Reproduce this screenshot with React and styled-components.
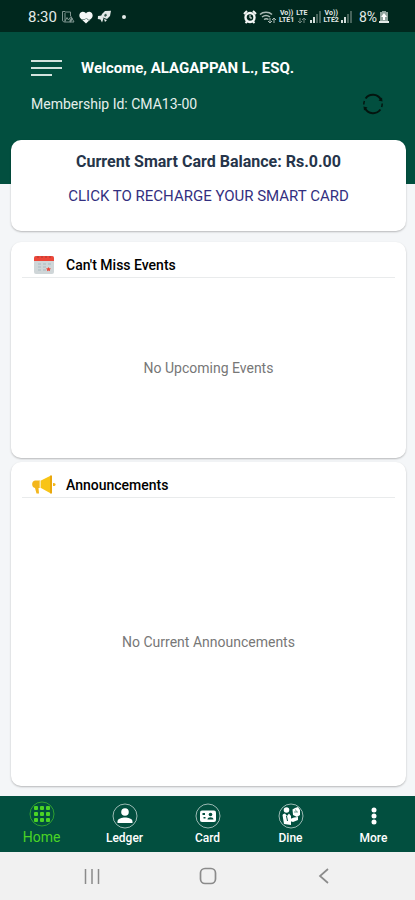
import React from 'react';
import styled, { createGlobalStyle } from 'styled-components';

const App = () => {
  return (
    <>
      <GlobalStyle />
      <Screen>
        <StatusBar />
        <Header>
          <TopRow>
            <MenuButton aria-label="Menu">
              <svg width="32" height="18" viewBox="0 0 32 18" fill="none" stroke="#d3e3de" strokeWidth="2">
                <path d="M0 2H31M0 9H31M0 16H21" />
              </svg>
            </MenuButton>
            <Welcome>Welcome, ALAGAPPAN L., ESQ.</Welcome>
          </TopRow>
          <MemberRow>
            <MemberId>Membership Id: CMA13-00</MemberId>
            <RefreshButton aria-label="Refresh">
              <RefreshIcon />
            </RefreshButton>
          </MemberRow>
        </Header>
        <Content>
          <BalanceCard>
            <Balance>Current Smart Card Balance: Rs.0.00</Balance>
            <Recharge href="#recharge">CLICK TO RECHARGE YOUR SMART CARD</Recharge>
          </BalanceCard>
          <Panels>
            <Panel title="Can't Miss Events" icon={<CalendarIcon />} empty="No Upcoming Events" grow={2} />
            <Panel title="Announcements" icon={<MegaphoneIcon />} empty="No Current Announcements" grow={3} />
          </Panels>
        </Content>
        <TabBar>
          {tabs.map(({ label, Icon, active }) => (
            <Tab key={label} href={`#${label.toLowerCase()}`} $active={active}>
              <Icon />
              <TabLabel $active={active}>{label}</TabLabel>
            </Tab>
          ))}
        </TabBar>
        <SystemBar />
      </Screen>
    </>
  )
}

const StatusBar = () => (
  <Status>
    <StatusGroup>
      <Clock>8:30</Clock>
      <svg width="14" height="14" viewBox="0 0 14 14" fill="none" stroke="#7f9690">
        <path d="M4 1.5H1.5V10C1.5 11.5 2.500 12 4 12M4 2H9.500V6M4 3V12H13L10 6.500L7.500 10L6 7.500L4 11" />
        <path d="M9 12L11 8" strokeWidth="2" />
      </svg>
      <svg width="14" height="13" viewBox="0 0 14 13">
        <path d="M7 12.500L1.400 7.200C-.6 5 .3 1 3.500.7C5.200.5 6.400 1.400 7 2.500C7.600 1.400 8.800.5 10.500.7C13.700 1 14.600 5 12.600 7.200Z" fill="#f4f7f6" />
        <path d="M3 8.500H6L7.500 7L9 9H11" stroke="#7f9690" fill="none" />
      </svg>
      <svg width="15" height="14" viewBox="0 0 15 14" fill="#e3eae8">
        <path d="M5 4L8 1L14 .8L13 6L10 9L7 8L4 6.500Z" />
        <path d="M1 6L5 5.500L6.500 8.500L5 12.500L3.500 9.500L.8 9Z" />
        <path d="M7 9L10 10L8 12Z" />
        <path d="M7 5L9 3.500L10 5.500L8 7Z" fill="#375a50" />
      </svg>
      <Dot />
    </StatusGroup>
    <StatusGroup $end>
      <svg width="14" height="14" viewBox="0 0 14 14" fill="none">
        <circle cx="7" cy="7.500" r="4.500" stroke="#f4f7f6" strokeWidth="2.400" />
        <path d="M1 4L4 1M13 4L10 1M2.500 13L4 11.500M11.500 13L10 11.500" stroke="#f4f7f6" strokeWidth="2" />
        <path d="M7 5V8H9" stroke="#f4f7f6" />
      </svg>
      <svg width="18" height="14" viewBox="0 0 18 14" fill="none" stroke="#a9bab5" strokeWidth="1.500">
        <path d="M1 4.500C4 1.500 10 1.500 13 4.500M3 7C5.500 5 8.500 5 11 7M5 9.500C6.500 8.500 8 8.500 9.500 9.500" />
        <path d="M11 8V13M9 11L11 13L13 11M15 13V8M13 10L15 8L17 10" strokeWidth="1" />
      </svg>
      <Carrier><span>Vo))</span><span>LTE1</span></Carrier>
      <Carrier>
        <span>LTE</span>
        <svg width="10" height="7" viewBox="0 0 10 7" fill="none" stroke="#70877f">
          <path d="M3 1V6M1 4L3 6L5 4M7 6V1M5 3L7 1L9 3" />
        </svg>
      </Carrier>
      <Signal />
      <Carrier><span>Vo))</span><span>LTE2</span></Carrier>
      <Signal />
      <Battery>8%</Battery>
      <svg width="10" height="14" viewBox="0 0 10 14">
        <path d="M3 1H7V2H9V13H1V2H3Z" fill="#91a59f" />
        <path d="M5 3L8 7H6V10H4V7H2Z" fill="#fff" />
        <path d="M0 11H10V13H0Z" fill="#e3eae8" />
      </svg>
    </StatusGroup>
  </Status>
)

const Signal = () => (
  <svg width="12" height="12" viewBox="0 0 12 12">
    <path d="M0 12V9H2V12ZM3 12V6H5V12Z" fill="#d3dedb" />
    <path d="M6 12V3H8V12ZM9 12V0H11V12Z" fill="#47645b" />
  </svg>
)

const RefreshIcon = () => (
  <svg width="22" height="22" viewBox="0 0 22 22" fill="none" stroke="#04150f" strokeWidth="2">
    <path d="M3.600 5.500A9 9 0 0 1 18.800 6.500M18.400 16.500A9 9 0 0 1 3.200 15.500" />
    <path d="M1.800 11.500C1.800 10 2 9 2.400 8M20.200 10.500C20.200 12 20 13 19.600 14" strokeWidth="1.500" />
    <path d="M16.500 7.500L20.500 8.500L20 4.500ZM5.500 14.500L1.500 13.500L2 17.500Z" fill="#04150f" stroke="none" />
  </svg>
)

const CalendarIcon = () => (
  <svg width="20" height="20" viewBox="0 0 20 20">
    <rect y="1" width="20" height="18" rx="2" fill="#cfd6d8" />
    <path d="M0 6V3Q0 1 2 1H18Q20 1 20 3V6Z" fill="#ed4639" />
    <path d="M4 1V3M8 1V3M12 1V3M16 1V3" stroke="#a93a34" />
    <path d="M4 9H7M9 9H12M14 9H17M4 12H7M9 12H12M4 15H7M9 15H12" stroke="#bcc8cc" strokeWidth="2" />
    <path d="M14.500 12L15.200 13.300L17 13.500L15.800 14.700L16 16.200L14.500 15.500L13 16.200L13.200 14.700L12 13.500L13.800 13.300Z" fill="#ed4639" />
  </svg>
)

const MegaphoneIcon = () => (
  <svg width="24" height="20" viewBox="0 0 24 20">
    <path d="M8 5.500V13H6.500L7 18.500H4.500L3 13C-.8 12.500-.8 6 3 5.500Z" fill="#f3b61c" />
    <path d="M9 5.500L18 1V18L9 13Z" fill="#f8c416" />
    <path d="M18 .5H20V18.500H18Z" fill="#e9a70c" />
    <path d="M21 8C24.500 7.500 24.500 11.500 21 11Z" fill="#f3b61c" />
    <path d="M7.500 5.500H9V13H7.500Z" fill="#fbe6a5" />
  </svg>
)

const Panel = ({ title, icon, empty, grow }) => (
  <PanelCard $grow={grow}>
    <PanelHead>
      <IconSlot>{icon}</IconSlot>
      <PanelTitle>{title}</PanelTitle>
    </PanelHead>
    <Empty>{empty}</Empty>
  </PanelCard>
)

const RoundIcon = ({ children }) => (
  <svg width="26" height="26" viewBox="0 0 26 26" fill="currentColor">
    <circle cx="13" cy="13" r="12" fill="none" stroke="currentColor" strokeOpacity=".6" />
    {children}
  </svg>
)

const HomeIcon = () => (
  <RoundIcon>
    {[7, 13, 19].map((y) => [7, 13, 19].map((x) => (
      <rect key={`${x}-${y}`} x={x - 2} y={y - 2} width="4" height="4" rx="1" />
    )))}
  </RoundIcon>
)

const LedgerIcon = () => (
  <RoundIcon>
    <circle cx="13" cy="9" r="3.800" />
    <path d="M5.500 20V18.500C5.500 15.500 10 14.500 13 14.500S20.500 15.500 20.500 18.500V20Z" />
  </RoundIcon>
)

const CardIcon = () => (
  <RoundIcon>
    <rect x="5" y="7.500" width="16" height="11.500" rx="2" />
    <g fill="#024f3f">
      <circle cx="15.500" cy="11.500" r="1.800" />
      <path d="M12.500 16.500C12.500 13.500 18.500 13.500 18.500 16.500ZM7.500 10H10V12H7.500ZM8.500 14H10.500V15.500H8.500Z" />
    </g>
  </RoundIcon>
)

const DineIcon = () => (
  <RoundIcon>
    <circle cx="8.500" cy="7" r="2.800" />
    <path d="M4.500 12Q5 10.500 7 10.500L9 13L11 10.500L13 13V22L6 21Z" />
    <path d="M12 16L16 14.500L20 14V17L15 19L12 18Z" />
    <path d="M14.500 6.500L17 5L20 4L22 7V12L19 14L15 12Z" />
    <path d="M16 9H20M17.500 6.500L18.500 9" stroke="#6f9c91" fill="none" />
    <path d="M8.500 13L9.500 18" stroke="#024f3f" />
  </RoundIcon>
)

const MoreIcon = () => (
  <svg width="26" height="26" viewBox="0 0 26 26" fill="currentColor">
    <circle cx="13" cy="7" r="2.500" />
    <circle cx="13" cy="13" r="2.500" />
    <circle cx="13" cy="19" r="2.500" />
  </svg>
)

const SystemBar = () => (
  <System>
    <SystemButton aria-label="Recent apps">
      <svg width="16" height="16" viewBox="0 0 16 16" stroke="#8b8b8b" strokeWidth="1.500">
        <path d="M1.500 1V16M8 1V16M14.500 1V16" />
      </svg>
    </SystemButton>
    <SystemButton aria-label="Home screen">
      <svg width="18" height="18" viewBox="0 0 18 18" fill="none" stroke="#8b8b8b" strokeWidth="1.700">
        <rect x="1.500" y="1.500" width="15" height="15" rx="4.500" />
      </svg>
    </SystemButton>
    <SystemButton aria-label="Back">
      <svg width="16" height="16" viewBox="0 0 16 16" fill="none" stroke="#8b8b8b" strokeWidth="1.700">
        <path d="M12 1L4 8L12 15" />
      </svg>
    </SystemButton>
  </System>
)

const tabs = [
  { label: 'Home', Icon: HomeIcon, active: true },
  { label: 'Ledger', Icon: LedgerIcon },
  { label: 'Card', Icon: CardIcon },
  { label: 'Dine', Icon: DineIcon },
  { label: 'More', Icon: MoreIcon },
];

export default App

const GlobalStyle = createGlobalStyle`
  * {
    box-sizing: border-box;
  }

  body {
    margin: 0;
    background-color: #f4f6f8;
    font-family: Roboto, sans-serif;
  }

  button {
    display: flex;
    padding: 0;
    border: none;
    background: none;
    cursor: pointer;
  }

  svg {
    display: block;
    flex-shrink: 0;
  }
`;

const Screen = styled.div`
  min-height: 100vh;
  display: flex;
  flex-direction: column;
`;

const Status = styled.div`
  height: 32px;
  padding: 2px 26px 0 28px;
  display: flex;
  justify-content: space-between;
  align-items: center;
  background-color: #00281e;
  color: #e3eae8;
`;

const StatusGroup = styled.div`
  display: flex;
  align-items: center;
  gap: ${(props) => (props.$end ? "2px" : "4px")};
`;

const Clock = styled.span`
  font-size: 15px;
`;

const Battery = styled.span`
  margin-left: 4px;
  font-size: 14px;
`;

const Dot = styled.span`
  width: 4px;
  height: 4px;
  margin-left: 6px;
  border-radius: 50%;
  background-color: #e3eae8;
`;

const Carrier = styled.span`
  display: flex;
  flex-direction: column;
  align-items: center;
  font-size: 7px;
  font-weight: 700;
  line-height: 7px;
`;

const Header = styled.header`
  height: 152px;
  padding: 24px 31px 0;
  background-color: #024f3f;
  color: white;
`;

const TopRow = styled.div`
  display: flex;
  align-items: center;
  gap: 18px;
  height: 24px;
`;

const MenuButton = styled.button``;

const Welcome = styled.h1`
  margin: 0;
  font-size: 15px;
  font-weight: 700;
`;

const MemberRow = styled.div`
  display: flex;
  justify-content: space-between;
  align-items: center;
  height: 24px;
  margin-top: 12px;
`;

const MemberId = styled.span`
  font-size: 14px;
  color: #e6efec;
`;

const RefreshButton = styled.button``;

const Content = styled.main`
  flex: 1;
  display: flex;
  flex-direction: column;
  gap: 11px;
  margin-top: -44px;
  padding: 0 9px 10px 11px;
`;

const Card = styled.section`
  border-radius: 10px;
  background-color: white;
  box-shadow: 0 1px 2px rgba(0, 0, 0, 0.25);
`;

const BalanceCard = styled(Card)`
  display: flex;
  flex-direction: column;
  align-items: center;
  gap: 14px;
  height: 91px;
  padding-top: 12px;
`;

const Balance = styled.h2`
  margin: 0;
  font-size: 16px;
  font-weight: 700;
  line-height: 20px;
  color: #26354a;
`;

const Recharge = styled.a`
  font-size: 15px;
  line-height: 20px;
  color: #332f80;
  text-decoration: none;
`;

const Panels = styled.div`
  flex: 1;
  display: grid;
  grid-template-rows: 2fr 3fr;
  gap: 4px;
`;

const PanelCard = styled(Card)`
  display: flex;
  flex-direction: column;
  padding: 12px 11px 0;
`;

const PanelHead = styled.div`
  display: flex;
  align-items: center;
  gap: 10px;
  height: 24px;
  padding: 0 10px 2px;
  border-bottom: 1px solid #e9ebec;
`;

const IconSlot = styled.span`
  display: flex;
  justify-content: center;
  width: 24px;
`;

const PanelTitle = styled.h2`
  margin: 0;
  font-size: 14px;
  font-weight: 500;
  color: #000;
`;

const Empty = styled.p`
  flex: 1;
  display: flex;
  justify-content: center;
  align-items: center;
  margin: 0;
  font-size: 14px;
  color: #777;
`;

const TabBar = styled.nav`
  display: flex;
  height: 56px;
  background-color: #024f3f;
`;

const Tab = styled.a`
  flex: 1;
  display: flex;
  flex-direction: column;
  align-items: center;
  padding-top: ${(props) => (props.$active ? "5px" : "7px")};
  color: ${(props) => (props.$active ? "#4bd425" : "white")};
  text-decoration: none;
`;

const TabLabel = styled.span`
  font-size: ${(props) => (props.$active ? "14px" : "12px")};
  font-weight: ${(props) => (props.$active ? "400" : "500")};
  line-height: ${(props) => (props.$active ? "20px" : "18px")};
`;

const System = styled.div`
  display: flex;
  justify-content: center;
  gap: 92px;
  height: 48px;
  background-color: #f1f1f1;
`;

const SystemButton = styled.button`
  justify-content: center;
  align-items: center;
  width: 24px;
`;
